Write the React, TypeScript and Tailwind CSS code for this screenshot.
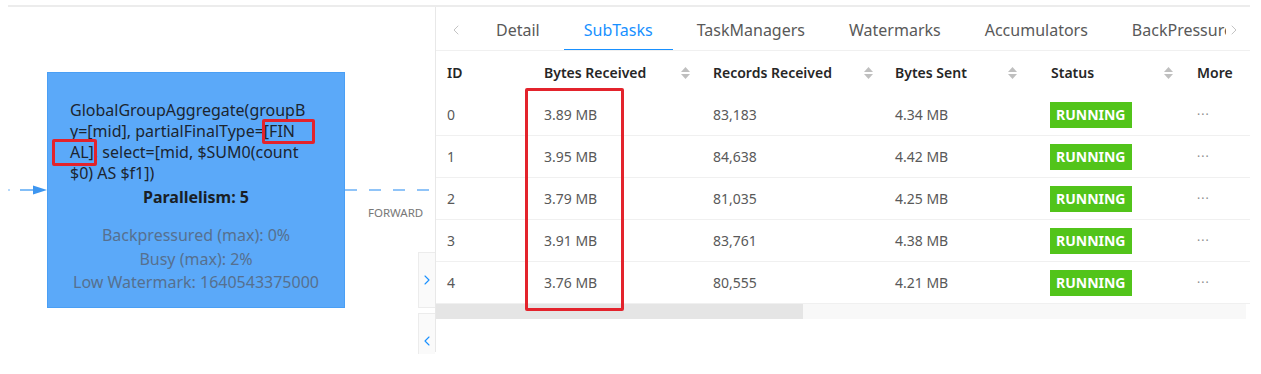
import React from 'react';
import { ChevronLeft, ChevronRight } from 'lucide-react';

interface SubTask {
  id: number;
  bytesReceived: string;
  recordsReceived: string;
  bytesSent: string;
  status: string;
}

const subTasks: SubTask[] = [
  { id: 0, bytesReceived: '3.89 MB', recordsReceived: '83,183', bytesSent: '4.34 MB', status: 'RUNNING' },
  { id: 1, bytesReceived: '3.95 MB', recordsReceived: '84,638', bytesSent: '4.42 MB', status: 'RUNNING' },
  { id: 2, bytesReceived: '3.79 MB', recordsReceived: '81,035', bytesSent: '4.25 MB', status: 'RUNNING' },
  { id: 3, bytesReceived: '3.91 MB', recordsReceived: '83,761', bytesSent: '4.38 MB', status: 'RUNNING' },
  { id: 4, bytesReceived: '3.76 MB', recordsReceived: '80,555', bytesSent: '4.21 MB', status: 'RUNNING' },
];

const tabs = ['Detail', 'SubTasks', 'TaskManagers', 'Watermarks', 'Accumulators', 'BackPressure'];

const Sorter = () => (
  <span className="flex flex-col gap-[2px] text-[#bfbfbf]">
    <svg width="9" height="5" viewBox="0 0 9 5"><path d="M4.5 0L9 5H0z" fill="currentColor" /></svg>
    <svg width="9" height="5" viewBox="0 0 9 5"><path d="M0 0h9L4.5 5z" fill="currentColor" /></svg>
  </span>
);

const JobGraph = () => (
  <div className="relative w-[427px] shrink-0 h-full">
    {/* incoming edge */}
    <svg className="absolute left-0 top-[176px]" width="40" height="14" viewBox="0 0 40 14">
      <circle cx="1" cy="7" r="0.8" fill="#5aa8f5" />
      <line x1="12" y1="7" x2="26" y2="7" stroke="#5aa8f5" strokeWidth="1.5" />
      <path d="M25 2.5L39 7L25 11.5z" fill="#3d96f0" />
    </svg>

    {/* outgoing edge */}
    <svg className="absolute left-[337px] top-[176px]" width="84" height="14" viewBox="0 0 84 14">
      <line x1="0" y1="7" x2="84" y2="7" stroke="#6cb1f6" strokeWidth="1.5" strokeDasharray="12 12" />
    </svg>
    <span className="absolute left-[360px] top-[197px] text-[11.5px] text-[#777]">FORWARD</span>

    {/* node */}
    <div className="absolute left-[39px] top-[65px] w-[298px] h-[236px] bg-[#5ba9f9] border border-[#4a9ff5] pt-[27px] px-[22px]">
      <div className="text-[16px] leading-[21px] text-[#1c2530]">
        <div className="whitespace-nowrap">GlobalGroupAggregate(groupB</div>
        <div className="whitespace-nowrap">
          y=[mid], partialFinalType=
          <span className="relative">
            [FIN
            <span className="absolute left-[-2px] right-[-20px] top-[-1px] bottom-[-2px] border-[3px] border-[#e3232c] rounded-[2px]" />
          </span>
        </div>
        <div className="whitespace-nowrap">
          <span className="relative">
            AL]
            <span className="absolute left-[-18px] right-[-3px] top-[-2px] bottom-[-3px] border-[3px] border-[#e3232c] rounded-[2px]" />
          </span>
          , select=[mid, $SUM0(count
        </div>
        <div className="whitespace-nowrap">$0) AS $f1])</div>
      </div>
      <div className="mt-[2px] text-center text-[16px] leading-[22px] font-bold text-[#1a1f26]">Parallelism: 5</div>
      <div className="mt-[16px] text-center text-[16px] leading-[23.5px] text-[#56708f]">
        <div>Backpressured (max): 0%</div>
        <div>Busy (max): 2%</div>
        <div>Low Watermark: 1640543375000</div>
      </div>
    </div>

    {/* drawer toggles */}
    <div className="absolute left-[410px] top-[245px] w-[17px] h-[56px] bg-[#fafafa] border border-r-0 border-[#ececec] flex items-center justify-center">
      <ChevronRight size={16} strokeWidth={1.6} className="text-[#1890ff]" />
    </div>
    <div className="absolute left-[410px] top-[306px] w-[17px] h-[41px] bg-[#fafafa] border border-r-0 border-b-0 border-[#ececec] flex items-center justify-center">
      <ChevronLeft size={16} strokeWidth={1.6} className="text-[#1890ff] mt-[14px]" />
    </div>
  </div>
);

const cols = [
  { label: 'ID', w: 'w-[97px]', sort: false, pr: '' },
  { label: 'Bytes Received', w: 'w-[169px]', sort: true, pr: 'pr-[12px]' },
  { label: 'Records Received', w: 'w-[182px]', sort: true, pr: 'pr-[11px]' },
  { label: 'Bytes Sent', w: 'w-[156px]', sort: true, pr: 'pr-[23px]' },
  { label: 'Status', w: 'w-[146px]', sort: true, pr: 'pr-[13px]' },
  { label: 'More', w: 'flex-1', sort: false, pr: '' },
];

const SubTaskPanel = () => (
  <div className="relative flex-1 min-w-0 border-l border-[#e8e8e8] flex flex-col">
    {/* tab bar */}
    <div className="h-[44px] pt-[2px] flex items-stretch border-b border-[#f0f0f0] text-[16px]">
      <div className="w-[40px] flex items-center justify-center text-[#c4c4c4]">
        <ChevronLeft size={16} strokeWidth={1.5} />
      </div>
      <div className="flex-1 min-w-0 overflow-hidden flex gap-[4px]">
        {tabs.map((t) => (
          <div
            key={t}
            className={`relative px-[20px] flex items-center whitespace-nowrap ${t === 'SubTasks' ? 'text-[#1890ff]' : 'text-[#595959]'}`}
          >
            {t}
            {t === 'SubTasks' && <span className="absolute left-0 right-0 bottom-[-1px] h-[2px] bg-[#1890ff]" />}
          </div>
        ))}
      </div>
      <div className="w-[24px] flex items-center justify-start text-[#c4c4c4]">
        <ChevronRight size={16} strokeWidth={1.5} />
      </div>
    </div>

    {/* header */}
    <div className="h-[43px] flex items-center text-[14px] font-semibold text-[#262626]">
      {cols.map((c) => (
        <div key={c.label} className={`${c.w} pl-[11px] ${c.pr} flex items-center justify-between`}>
          <span className="whitespace-nowrap">{c.label}</span>
          {c.sort && <Sorter />}
        </div>
      ))}
    </div>

    {/* rows */}
    {subTasks.map((r) => (
      <div key={r.id} className="h-[42px] flex items-center border-b border-[#f0f0f0] text-[14px] text-[#595959]">
        <div className="w-[97px] pl-[11px]">{r.id}</div>
        <div className="w-[169px] pl-[11px]">{r.bytesReceived}</div>
        <div className="w-[182px] pl-[11px]">{r.recordsReceived}</div>
        <div className="w-[156px] pl-[11px]">{r.bytesSent}</div>
        <div className="w-[146px] pl-[10px]">
          <span className="inline-flex items-center h-[26px] px-[6px] bg-[#52c41a] text-white text-[14px] font-bold">{r.status}</span>
        </div>
        <div className="flex-1 pl-[11px] text-[#8c8c8c] text-[12px] tracking-[1px]">···</div>
      </div>
    ))}

    {/* horizontal scrollbar */}
    <div className="h-[15px] mr-[4px] bg-[#f8f8f8] flex">
      <div className="w-[367px] bg-[#e5e5e5]" />
    </div>

    {/* annotation box */}
    <div className="absolute left-[89px] top-[81px] w-[99px] h-[223px] border-[3px] border-[#e3232c] rounded-[2px]" />
  </div>
);

export default function App() {
  return (
    <div className="w-[1261px] h-[374px] bg-white overflow-hidden" style={{ fontFamily: '"Noto Sans", "Open Sans", sans-serif' }}>
      <div className="ml-[8px] mt-[5px] w-[1242px] h-[347px] border-t-2 border-[#ececec] flex">
        <JobGraph />
        <SubTaskPanel />
      </div>
    </div>
  );
}
